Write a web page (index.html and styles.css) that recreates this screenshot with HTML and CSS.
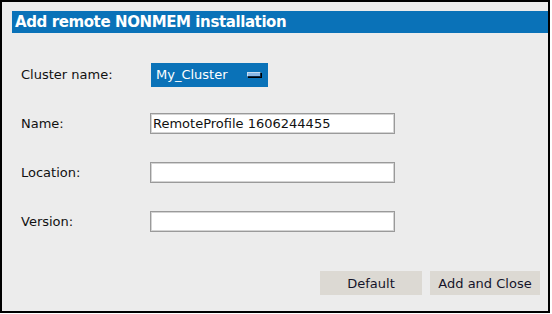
FILE: index.html
```html
<!DOCTYPE html>
<html lang="en">
<head>
  <meta charset="UTF-8" />
  <title>Add remote NONMEM installation</title>
  <link rel="stylesheet" href="styles.css">
</head>
<body>
  <div class="dialog">
    <header class="dialog-title">Add remote NONMEM installation</header>

    <div class="form-grid">
      <label class="field-label">Cluster name:</label>
      <div class="field">
        <button class="dropdown" type="button">
          <span>My_Cluster</span>
          <span class="dropdown-mark"></span>
        </button>
      </div>

      <label class="field-label" for="name">Name:</label>
      <div class="field"><input id="name" class="text-input" type="text" value="RemoteProfile 1606244455"></div>

      <label class="field-label" for="location">Location:</label>
      <div class="field"><input id="location" class="text-input" type="text"></div>

      <label class="field-label" for="version">Version:</label>
      <div class="field"><input id="version" class="text-input" type="text"></div>
    </div>

    <div class="button-row">
      <button class="action-btn btn-default" type="button">Default</button>
      <button class="action-btn btn-close" type="button">Add and Close</button>
    </div>
  </div>
</body>
</html>
```

FILE: styles.css
```css
body {
  margin: 0;
  padding: 0;
  background: #fff;
  font-family: 'DejaVu Sans', Verdana, sans-serif;
  font-size: 13px;
  color: #111;
}

.dialog {
  width: 550px;
  height: 313px;
  box-sizing: border-box;
  border: 2px solid #000;
  background: #ececec;
  display: flex;
  flex-direction: column;
}

.dialog-title {
  margin: 9px 0 0 10px;
  height: 22px;
  line-height: 22px;
  padding-left: 3px;
  background: #0a72b8;
  color: #fff;
  font-weight: bold;
  font-size: 15px;
  letter-spacing: -0.4px;
}

.form-grid {
  display: grid;
  grid-template-columns: 129px 1fr;
  grid-auto-rows: 49px;
  align-items: center;
  margin-top: 17px;
  padding-left: 19px;
}

.field-label {
  color: #111;
}

.field {
  display: flex;
  align-items: center;
}

.dropdown {
  width: 117px;
  height: 24px;
  margin-left: 1px;
  padding: 0 6px 0 5px;
  border: none;
  background: #0a72b8;
  color: #fff;
  font-family: inherit;
  font-size: 13px;
  display: flex;
  align-items: center;
  justify-content: space-between;
  cursor: pointer;
}

.dropdown-mark {
  width: 12px;
  height: 3px;
  background: #8ab8e6;
  border: 1px solid #0c2a48;
  border-top-color: #c6ddf2;
  border-left-color: #c6ddf2;
  box-shadow: 1px 1px 0 #000;
  margin-right: 1px;
}

.text-input {
  width: 245px;
  height: 21px;
  box-sizing: border-box;
  margin: 0;
  padding: 0 2px;
  border: 1px solid #9a9a9a;
  box-shadow: inset 0 0 0 1px #d4d4d4;
  background: #fff;
  font-family: inherit;
  font-size: 13px;
  color: #111;
  outline: none;
}

.button-row {
  margin-top: auto;
  margin-bottom: 16px;
  display: flex;
  justify-content: flex-end;
  gap: 8px;
  padding-right: 8px;
}

.action-btn {
  height: 24px;
  border: none;
  background: #dcd9d3;
  color: #14142a;
  font-family: inherit;
  font-size: 13px;
  padding: 0;
}

.btn-default {
  width: 102px;
}

.btn-close {
  width: 110px;
}
```
